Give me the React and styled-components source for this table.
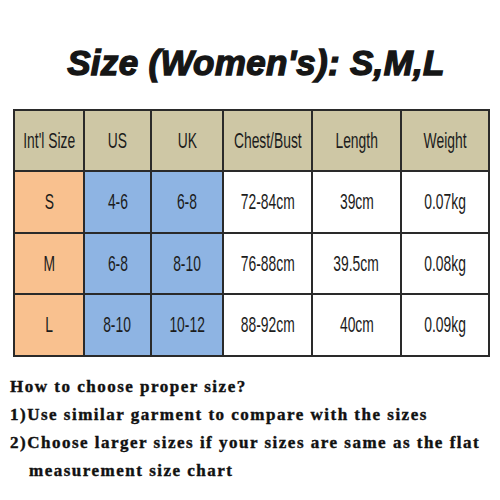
import React from "react";
import styled, { createGlobalStyle } from "styled-components";

const GlobalStyle = createGlobalStyle`
	html, body {
		margin: 0;
		padding: 0;
		background: #ffffff;
	}
`;

const Page = styled.div`
	width: 500px;
	height: 500px;
	overflow: hidden;
	background: #fff;
	display: flex;
	flex-direction: column;
`;

const Title = styled.h1`
	margin: 43px 0 0 0;
	padding-left: 12px;
	height: 40px;
	line-height: 40px;
	text-align: center;
	font-family: "Liberation Sans", Arial, sans-serif;
	font-weight: 700;
	font-style: italic;
	font-size: 35px;
	letter-spacing: 0.3px;
	color: #161616;
	-webkit-text-stroke: 1.4px #161616;
	white-space: nowrap;
`;

const Grid = styled.div`
	margin: 26px 0 0 13px;
	width: 473px;
	display: grid;
	grid-template-columns: 68px 65px 70px 87px 87px 86px;
	grid-template-rows: 59px 60px 59px 60px;
	gap: 2px;
	padding: 2px;
	background: #2a2a2a;
`;

const tones = {
	head: "#cec7a5",
	size: "#f9c18f",
	intl: "#8eb4e3",
	plain: "#ffffff",
};

const Cell = styled.div`
	background: ${(p) => tones[p.$tone] || tones.plain};
	display: flex;
	align-items: center;
	justify-content: center;
	overflow: hidden;
`;

const Label = styled.span`
	display: inline-block;
	white-space: nowrap;
	font-family: "Liberation Sans", Arial, sans-serif;
	font-size: 22px;
	color: #1c1c1c;
	transform: scaleX(0.63);
`;

const Notes = styled.div`
	margin-top: 16px;
	padding-left: 10px;
	font-family: "Liberation Serif", "Times New Roman", serif;
	font-weight: 700;
	font-size: 17px;
	line-height: 28px;
	letter-spacing: 1.5px;
	color: #111;
	-webkit-text-stroke: 0.4px #111;
`;

const Line = styled.div`
	white-space: nowrap;
	padding-left: ${(p) => (p.$indent ? "19px" : "0")};
`;

const header = ["Int'l Size", "US", "UK", "Chest/Bust", "Length", "Weight"];
const rows = [
	["S", "4-6", "6-8", "72-84cm", "39cm", "0.07kg"],
	["M", "6-8", "8-10", "76-88cm", "39.5cm", "0.08kg"],
	["L", "8-10", "10-12", "88-92cm", "40cm", "0.09kg"],
];

const toneFor = (i) => (i === 0 ? "size" : i < 3 ? "intl" : "plain");

export default function App() {
	return (
		<Page>
			<GlobalStyle />
			<Title>Size (Women's): S,M,L</Title>
			<Grid>
				{header.map((h) => (
					<Cell key={h} $tone="head">
						<Label>{h}</Label>
					</Cell>
				))}
				{rows.map((r) =>
					r.map((v, i) => (
						<Cell key={r[0] + i} $tone={toneFor(i)}>
							<Label>{v}</Label>
						</Cell>
					))
				)}
			</Grid>
			<Notes>
				<Line>How to choose proper size?</Line>
				<Line>1)Use similar garment to compare with the sizes</Line>
				<Line>2)Choose larger sizes if your sizes are same as the flat</Line>
				<Line $indent>measurement size chart</Line>
			</Notes>
		</Page>
	);
}
